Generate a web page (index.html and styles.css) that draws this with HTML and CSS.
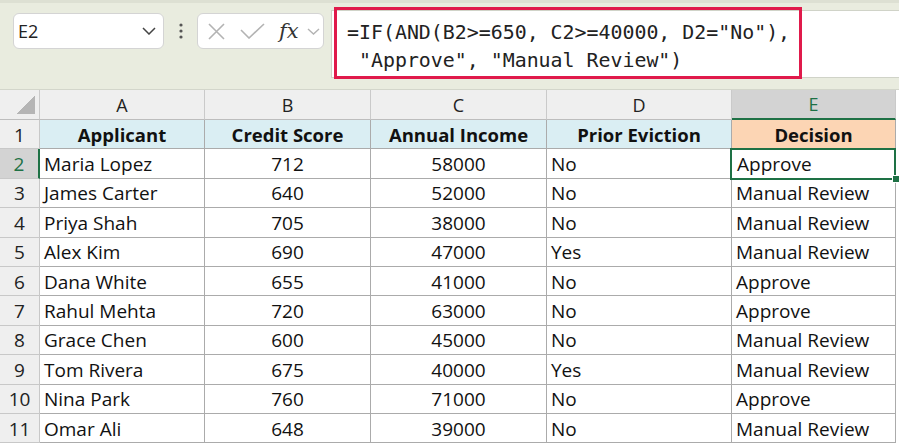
FILE: index.html
```html
<!DOCTYPE html>
<html>
<head>
    <meta charset="UTF-8">
    <link rel="stylesheet" href="styles.css">
</head>
<body>
<div class="topbar">
    <div class="namebox">
        <span>E2</span>
        <svg width="14" height="8" viewBox="0 0 14 8"><polyline points="1,1 7,7 13,1" fill="none" stroke="#444" stroke-width="1.5"/></svg>
    </div>
    <svg class="dots" width="6" height="16" viewBox="0 0 6 16"><circle cx="3" cy="2" r="1.6" fill="#555"/><circle cx="3" cy="8" r="1.6" fill="#555"/><circle cx="3" cy="14" r="1.6" fill="#555"/></svg>
    <div class="fxbox">
        <svg class="ic-x" width="17" height="17" viewBox="0 0 17 17"><path d="M1 1L16 16M16 1L1 16" stroke="#b3b3b3" stroke-width="1.6" fill="none"/></svg>
        <svg class="ic-ok" width="25" height="16" viewBox="0 0 25 16"><polyline points="1,7 9,15 24,1" fill="none" stroke="#b3b3b3" stroke-width="1.6"/></svg>
        <span class="fx">fx</span>
        <svg class="ic-dd" width="13" height="7" viewBox="0 0 13 7"><polyline points="1,1 6.5,6 12,1" fill="none" stroke="#b3b3b3" stroke-width="1.4"/></svg>
    </div>
    <div class="formula">
        <div class="formula-hl">=IF(AND(B2&gt;=650, C2&gt;=40000, D2="No"),
 "Approve", "Manual Review")</div>
    </div>
</div>

<div class="sheet">
    <div class="c h corner"><span class="tri"></span></div>
    <div class="c h">A</div>
    <div class="c h">B</div>
    <div class="c h">C</div>
    <div class="c h">D</div>
    <div class="c h on">E</div>

    <div class="c r">1</div>
    <div class="c th">Applicant</div>
    <div class="c th">Credit Score</div>
    <div class="c th">Annual Income</div>
    <div class="c th">Prior Eviction</div>
    <div class="c th dec">Decision</div>

    <div class="c r on">2</div>
    <div class="c">Maria Lopez</div><div class="c n">712</div><div class="c n">58000</div><div class="c">No</div><div class="c sel">Approve</div>
    <div class="c r">3</div>
    <div class="c">James Carter</div><div class="c n">640</div><div class="c n">52000</div><div class="c">No</div><div class="c">Manual Review</div>
    <div class="c r">4</div>
    <div class="c">Priya Shah</div><div class="c n">705</div><div class="c n">38000</div><div class="c">No</div><div class="c">Manual Review</div>
    <div class="c r">5</div>
    <div class="c">Alex Kim</div><div class="c n">690</div><div class="c n">47000</div><div class="c">Yes</div><div class="c">Manual Review</div>
    <div class="c r">6</div>
    <div class="c">Dana White</div><div class="c n">655</div><div class="c n">41000</div><div class="c">No</div><div class="c">Approve</div>
    <div class="c r">7</div>
    <div class="c">Rahul Mehta</div><div class="c n">720</div><div class="c n">63000</div><div class="c">No</div><div class="c">Approve</div>
    <div class="c r">8</div>
    <div class="c">Grace Chen</div><div class="c n">600</div><div class="c n">45000</div><div class="c">No</div><div class="c">Manual Review</div>
    <div class="c r">9</div>
    <div class="c">Tom Rivera</div><div class="c n">675</div><div class="c n">40000</div><div class="c">Yes</div><div class="c">Manual Review</div>
    <div class="c r">10</div>
    <div class="c">Nina Park</div><div class="c n">760</div><div class="c n">71000</div><div class="c">No</div><div class="c">Approve</div>
    <div class="c r">11</div>
    <div class="c">Omar Ali</div><div class="c n">648</div><div class="c n">39000</div><div class="c">No</div><div class="c">Manual Review</div>
</div>
</body>
</html>
```

FILE: styles.css
```css
html,body{margin: 0;padding: 0;}
body{width: 899px;height: 446px;overflow: hidden;background: #fff;font-family: "Open Sans", "Liberation Sans", sans-serif;color: #111;}

/* formula bar */
.topbar{
    display: flex;align-items: flex-start;
    height: 90px;box-sizing: border-box;
    padding: 10px 0 0 13px;
    background: #e9ecdf;
    border-top: 3px solid #dde0d3;
    border-bottom: 1px solid #d3d6cb;
}
.namebox,.fxbox{
    display: flex;align-items: center;
    height: 36px;box-sizing: border-box;
    background: #fff;border: 1px solid #d4d4d4;border-radius: 6px;
}
.namebox{width: 151px;justify-content: space-between;padding: 0 7px 0 4px;font-size: 18px;color: #222;}
.dots{margin: 10px 13px 0 14px;}
.fxbox{width: 127px;padding-left: 10px;}
.ic-x{margin-right: 15px;}
.ic-ok{margin-right: 14px;}
.fx{font-family: "DejaVu Serif", "Liberation Serif", serif;font-style: italic;font-size: 21px;color: #333;margin-right: 8px;line-height: 1;}
.formula{
    flex: 1;
    height: 68px;box-sizing: border-box;
    margin: -3px 0 0 7px;
    background: #fff;
    border: 1px solid #d0d3c8;border-right: 0;
}
.formula-hl{
    display: inline-block;
    margin: -4px 0 0 2px;
    padding: 9px 9px 1px 10px;
    border: 3px solid #e01a4b;
    font-family: "DejaVu Sans Mono", "Liberation Mono", monospace;
    font-size: 19.9px;line-height: 28px;
    white-space: pre;color: #222;
}

/* grid */
.sheet{
    display: grid;
    grid-template-columns: 40px 165px 166px 176px 185px 164px;
    grid-template-rows: 30px repeat(11, 29.4px);
    width: 896px;
}
.c{
    display: flex;align-items: center;
    box-sizing: border-box;
    padding: 1px 4px 0;
    border-right: 1px solid #ababab;border-bottom: 1px solid #ababab;
    font-size: 19px;white-space: nowrap;overflow: hidden;
}
.n{justify-content: center;}
.h{background: #efefef;justify-content: center;font-size: 18px;color: #222;border-color: #cacaca;border-bottom-color: #bdbdbd;padding: 0;}
.r{background: #efefef;justify-content: center;font-size: 19px;color: #222;border-color: #c8c8c8;padding: 1px 0 0;}
.h.on,.r.on{background: #d3d3d3;color: #1e7145;}
.h.on{border-bottom: 2px solid #1e7145;}
.r.on{border-right: 2px solid #1e7145;}
.corner{justify-content: flex-end;align-items: flex-end;}
.tri{width: 19px;height: 19px;margin: 0 4px 5px 0;background: linear-gradient(to bottom right, transparent 50%, #b5b5b5 50%);}
.th{background: #daeef3;justify-content: center;font-weight: 700;font-size: 18.5px;}
.th.dec{background: #fcd5b4;}
.sel{position: relative;overflow: visible;padding-left: 5px;}
.sel::after{content: "";position: absolute;left: -2px;top: -1px;right: -1px;bottom: -2px;border: 2px solid #1e7145;}
.sel::before{content: "";position: absolute;right: -5px;bottom: -5px;width: 6px;height: 6px;background: #1e7145;border: 1px solid #fff;z-index: 2;}
```
